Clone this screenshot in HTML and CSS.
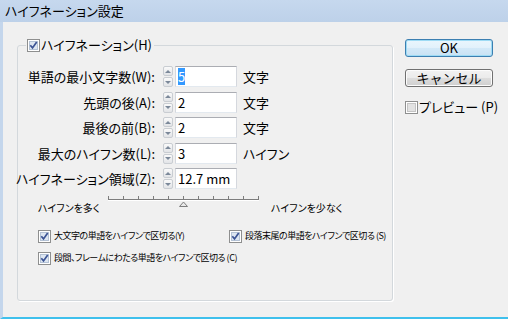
FILE: index.html
```html
<!DOCTYPE html>
<html lang="ja">
<head>
    <meta charset="UTF-8">
    <title>ハイフネーション設定</title>
    <link rel="stylesheet" href="styles.css">
</head>
<body>
<div class="window">
    <div class="titlebar">ハイフネーション設定</div>
    <div class="content">
        <fieldset class="group">
            <legend class="group-title">
                <svg class="cb" viewBox="0 0 13 13"><rect x=".5" y=".5" width="12" height="12" fill="#fff" stroke="#8e8f8f"/><rect x="2.5" y="2.5" width="8" height="8" fill="#dde6f1" stroke="#b4c2d5"/><path d="M3.3 6.3l2.2 2.6 4.2-6" fill="none" stroke="#3b5394" stroke-width="1.7"/></svg>
                ハイフネーション(H)
            </legend>
            <!--数値入力の行-->
            <div class="fields">
                <label>単語の最小文字数(W):</label>
                <span class="spin"><i class="up"></i><i class="down"></i></span>
                <span class="box"><span class="sel">5</span></span>
                <span class="unit">文字</span>

                <label>先頭の後(A):</label>
                <span class="spin"><i class="up"></i><i class="down"></i></span>
                <span class="box">2</span>
                <span class="unit">文字</span>

                <label>最後の前(B):</label>
                <span class="spin"><i class="up"></i><i class="down"></i></span>
                <span class="box">2</span>
                <span class="unit">文字</span>

                <label>最大のハイフン数(L):</label>
                <span class="spin"><i class="up"></i><i class="down"></i></span>
                <span class="box">3</span>
                <span class="unit">ハイフン</span>

                <label>ハイフネーション領域(Z):</label>
                <span class="spin"><i class="up"></i><i class="down"></i></span>
                <span class="box">12.7 mm</span>
                <span class="unit"></span>
            </div>
            <!--スライダー-->
            <div class="slider">
                <span class="lo">ハイフンを多く</span>
                <svg class="track" width="151" height="12" viewBox="0 0 151 12">
                    <path d="M0 3.5h151" stroke="#7d7d7d"/>
                    <path d="M0 4.5h151" stroke="#fff"/>
                    <path d="M.5 0v3M15.5 0v3M30.5 0v3M45.5 0v3M60.5 0v3M75.5 0v3M90.5 0v3M105.5 0v3M120.5 0v3M135.5 0v3M150.5 0v3" stroke="#7d7d7d"/>
                    <path d="M71.5 10.5l4-4.5 4 4.5z" fill="#e9e9e9" stroke="#7d7d7d"/>
                </svg>
                <span class="hi">ハイフンを少なく</span>
            </div>
            <!--オプション-->
            <div class="opts">
                <label class="check">
                    <svg class="cb" viewBox="0 0 13 13"><rect x=".5" y=".5" width="12" height="12" fill="#fff" stroke="#8e8f8f"/><rect x="2.5" y="2.5" width="8" height="8" fill="#dde6f1" stroke="#b4c2d5"/><path d="M3.3 6.3l2.2 2.6 4.2-6" fill="none" stroke="#3b5394" stroke-width="1.7"/></svg>
                    大文字の単語をハイフンで区切る(Y)
                </label>
                <label class="check">
                    <svg class="cb" viewBox="0 0 13 13"><rect x=".5" y=".5" width="12" height="12" fill="#fff" stroke="#8e8f8f"/><rect x="2.5" y="2.5" width="8" height="8" fill="#dde6f1" stroke="#b4c2d5"/><path d="M3.3 6.3l2.2 2.6 4.2-6" fill="none" stroke="#3b5394" stroke-width="1.7"/></svg>
                    段落末尾の単語をハイフンで区切る (S)
                </label>
                <label class="check wide">
                    <svg class="cb" viewBox="0 0 13 13"><rect x=".5" y=".5" width="12" height="12" fill="#fff" stroke="#8e8f8f"/><rect x="2.5" y="2.5" width="8" height="8" fill="#dde6f1" stroke="#b4c2d5"/><path d="M3.3 6.3l2.2 2.6 4.2-6" fill="none" stroke="#3b5394" stroke-width="1.7"/></svg>
                    段間、フレームにわたる単語をハイフンで区切る (C)
                </label>
            </div>
        </fieldset>
        <div class="side">
            <button class="btn default">OK</button>
            <button class="btn">キャンセル</button>
            <label class="check preview">
                <svg class="cb" viewBox="0 0 13 13"><rect x=".5" y=".5" width="12" height="12" fill="#fff" stroke="#8e8f8f"/><rect x="2.5" y="2.5" width="8" height="8" fill="#e2e2e2" stroke="#c4c4c4"/></svg>
                プレビュー (P)
            </label>
        </div>
    </div>
</div>
</body>
</html>
```

FILE: styles.css
```css
/*リセット*/
*{
    margin: 0;
    padding: 0;
    box-sizing: border-box;
}
body{
    width: 508px;
    height: 319px;
    overflow: hidden;
    background: #f0f0f0;
    font-family: "Noto Sans CJK JP", sans-serif;
    font-size: 13px;
    color: #000;
    font-feature-settings: "palt";
}
/*ウィンドウ枠*/
.window{
    height: 319px;
    display: flex;
    flex-direction: column;
    border-left: 3px solid #c4d6ec;
    border-bottom: 2px solid #3fc0ec;
}
.titlebar{
    height: 22px;
    line-height: 22px;
    font-size: 13px;
    background: linear-gradient(#c6d8ee, #bdd1e9);
    margin-left: -3px;
    padding-left: 5px;
}
.content{
    flex: 1;
    display: flex;
    gap: 12px;
    padding: 15px 0 0 14px;
}
/*グループボックス*/
.group{
    width: 376px;
    height: 264px;
    border: 1px solid #d3d8dc;
    border-radius: 3px;
    box-shadow: 1px 1px 0 #fff;
    min-width: 0;
}
.group-title{
    display: flex;
    align-items: center;
    gap: 1px;
    margin-left: 8px;
    padding: 0 2px 0 1px;
    line-height: 16px;
}
.cb{
    width: 13px;
    height: 13px;
    flex: none;
}
/*数値フィールド*/
.fields{
    display: grid;
    grid-template-columns: 145px 10px 64px auto;
    grid-auto-rows: 21px;
    row-gap: 4.5px;
    align-items: center;
    margin-top: 13px;
}
.fields label{
    justify-self: end;
    white-space: nowrap;
    padding-right: 8px;
}
.spin{
    height: 21px;
    display: flex;
    flex-direction: column;
    gap: 1px;
}
.spin i{
    flex: 1;
    display: flex;
    align-items: center;
    justify-content: center;
    border: 1px solid #c9cdd2;
    border-radius: 2px;
    background: linear-gradient(#fafafa, #e2e4e7);
}
.spin .up::after{
    content: "";
    border-left: 3px solid transparent;
    border-right: 3px solid transparent;
    border-bottom: 3px solid #7b8899;
}
.spin .down::after{
    content: "";
    border-left: 3px solid transparent;
    border-right: 3px solid transparent;
    border-top: 3px solid #7b8899;
}
.box{
    height: 21px;
    width: 62px;
    margin-left: 2px;
    display: flex;
    align-items: center;
    padding-left: 2px;
    background: #fff;
    border: 1px solid;
    border-color: #abadb3 #d5d8de #e3e9ef #d5d8de;
}
.sel{
    background: #3399ff;
    color: #fff;
    line-height: 17px;
}
.unit{
    margin-left: 6px;
}
/*スライダー*/
.slider{
    display: flex;
    align-items: flex-start;
    margin: 7px 0 0 20px;
    font-size: 10px;
}
.slider .lo{
    width: 70px;
    margin-top: 4px;
    line-height: 16px;
}
.slider .hi{
    margin: 4px 0 0 12px;
    line-height: 16px;
}
/*チェックボックス*/
.opts{
    display: grid;
    grid-template-columns: 191px auto;
    row-gap: 6px;
    margin: 12px 0 0 20px;
    font-size: 9px;
    letter-spacing: -0.5px;
}
.check{
    display: flex;
    align-items: center;
    gap: 3px;
    line-height: 16px;
    white-space: nowrap;
}
.wide{
    grid-column: 1 / 3;
}
/*右側のボタン*/
.side{
    width: 88px;
    display: flex;
    flex-direction: column;
    padding-top: 2px;
}
.btn{
    height: 18px;
    font-family: inherit;
    font-size: 13px;
    line-height: 16px;
    border: 1px solid #707070;
    border-radius: 3px;
    background: linear-gradient(#f2f2f2 0%, #ebebeb 50%, #dddddd 51%, #cfcfcf 100%);
    box-shadow: inset 0 0 0 1px #fcfcfc;
    margin-bottom: 12px;
}
.btn.default{
    border-color: #3c7fb1;
    box-shadow: inset 0 0 0 1px #9edbf4;
    background: linear-gradient(#eaf6fd 0%, #e2f1fb 50%, #d3e9f8 51%, #c9e2f4 100%);
}
.preview{
    font-size: 13px;
    letter-spacing: 0;
    gap: 1px;
}
```
